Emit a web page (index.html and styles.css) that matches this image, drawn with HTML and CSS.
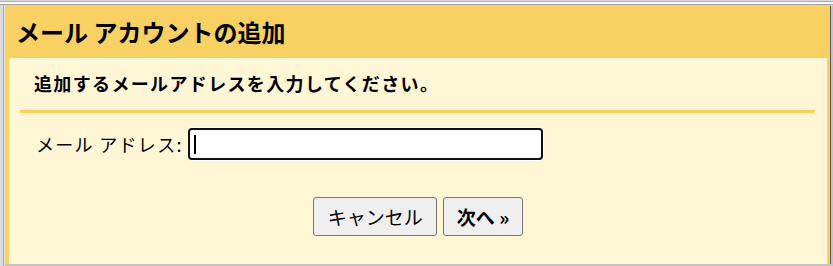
FILE: index.html
```html
<!DOCTYPE html>
<html lang="ja">
<head>
<meta charset="utf-8">
<link rel="stylesheet" href="styles.css">
</head>
<body>
<div class="window">
  <div class="popup">
    <div class="header"><h1 class="title">メール アカウントの追加</h1></div>
    <div class="content">
      <div class="intro">
        <p class="subtitle">追加するメールアドレスを入力してください。</p>
      </div>
      <div class="row">
        <label class="label" for="addr">メール アドレス:</label>
        <span class="field"><input id="addr" class="input" type="text"><span class="caret"></span></span>
      </div>
      <div class="buttons">
        <button class="btn">キャンセル</button>
        <button class="btn btn-primary">次へ »</button>
      </div>
    </div>
  </div>
</div>
</body>
</html>
```

FILE: styles.css
```css
html, body {
  margin: 0;
  padding: 0;
  width: 833px;
  height: 266px;
  overflow: hidden;
}
body {
  font-family: "Noto Sans CJK JP", "Noto Sans", sans-serif;
  background:
    linear-gradient(to bottom, #dadada 0 1px, #a9a9a9 1px 2px, #ffffff 2px 4px, #a9a9a9 4px 5px, #cfcfcf 5px 6px, transparent 6px),
    linear-gradient(to right, #dcdcdc 0 3px, #a3a3a3 3px 4px, #e6e6e6 4px 5px, transparent 5px),
    #c4c4c4;
}
.window {
  padding: 6px 2px 2px 5px;
  height: 258px;
}
.popup {
  height: 258px;
  background: #f9d162;
  border-right: 1px solid #5a5a5a;
  display: flex;
  flex-direction: column;
}
.header {
  height: 52px;
  display: flex;
  align-items: center;
  padding-left: 11px;
  flex: none;
}
.title {
  margin: 0;
  font-size: 24px;
  font-weight: bold;
  color: #000;
  line-height: 1;
}
.content {
  flex: 1;
  background: #fff6d6;
  margin: 0 3px 0 4px;
}
.intro {
  margin: 0 12px 0 11px;
  border-bottom: 3px solid #f9d162;
  height: 52px;
  display: flex;
  align-items: center;
}
.subtitle {
  margin: 0;
  padding-left: 14px;
  font-size: 18px;
  letter-spacing: 1.35px;
  font-weight: bold;
  color: #000;
  line-height: 1;
  padding-bottom: 3px;
}
.row {
  display: flex;
  align-items: center;
  padding-left: 27px;
  margin-top: 15px;
  height: 32px;
}
.label {
  font-size: 18px;
  letter-spacing: 1.3px;
  color: #000;
  margin-right: 5px;
}
.field {
  position: relative;
  display: block;
}
.input {
  display: block;
  box-sizing: border-box;
  width: 355px;
  height: 32px;
  border: 2px solid #101010;
  border-radius: 4px;
  box-shadow: 0 0 0 1px #ffffff;
  background: #fff;
  outline: none;
  margin: 0;
  caret-color: transparent;
}
.caret {
  position: absolute;
  left: 6px;
  top: 7px;
  width: 2px;
  height: 19px;
  background: #000;
}
.buttons {
  display: flex;
  justify-content: center;
  gap: 6px;
  margin-top: 37px;
}
.btn {
  font-family: "Noto Sans CJK JP", "Noto Sans", sans-serif;
  font-size: 19px;
  height: 39px;
  padding: 0 13px 0 14px;
  background: #efefef;
  border: 1px solid #767676;
  border-radius: 3px;
  color: #000;
  line-height: 1;
}
.btn-primary {
  font-weight: bold;
  padding: 0 13px 0 13px;
}
```
